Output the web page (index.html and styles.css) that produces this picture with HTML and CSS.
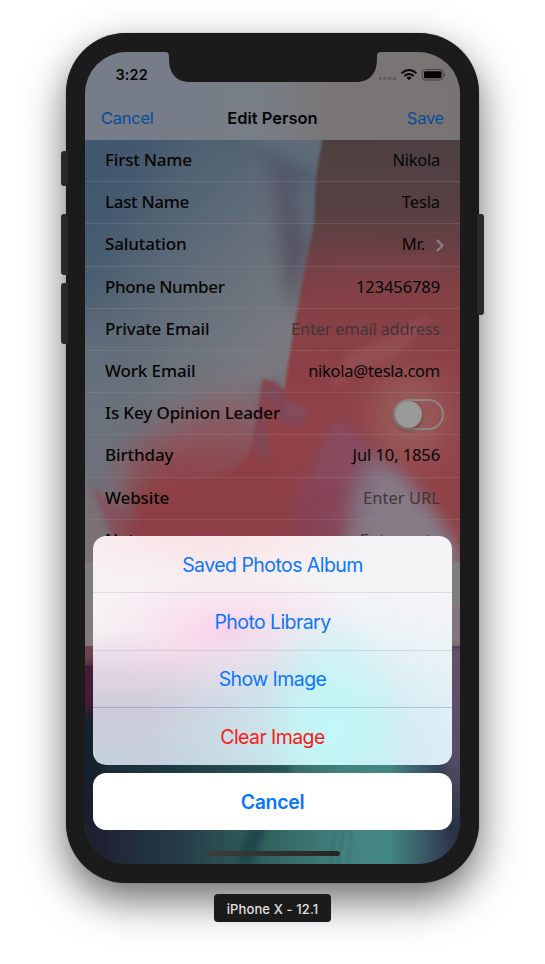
FILE: index.html
```html
<!DOCTYPE html>
<html lang="en">
<head>
<meta charset="utf-8">
<title>Edit Person</title>
<link rel="stylesheet" href="styles.css">
</head>
<body>
<main class="stage">
<div class="phone">
  <i class="key mute"></i><i class="key up"></i><i class="key down"></i><i class="key power"></i>
  <div class="screen">
    <svg class="wallpaper" viewBox="0 0 375 812" preserveAspectRatio="none">
      <defs>
        <filter id="b1" filterUnits="userSpaceOnUse" x="-60" y="0" width="500" height="900" color-interpolation-filters="sRGB"><feGaussianBlur stdDeviation="1.8"/></filter>
        <filter id="b3" filterUnits="userSpaceOnUse" x="-60" y="0" width="500" height="900" color-interpolation-filters="sRGB"><feGaussianBlur stdDeviation="3.5"/></filter>
        <filter id="b8" filterUnits="userSpaceOnUse" x="-60" y="0" width="500" height="900" color-interpolation-filters="sRGB"><feGaussianBlur stdDeviation="9"/></filter>
        <filter id="b20" filterUnits="userSpaceOnUse" x="-100" y="0" width="600" height="900" color-interpolation-filters="sRGB"><feGaussianBlur stdDeviation="20"/></filter>
        <linearGradient id="blue" gradientUnits="userSpaceOnUse" x1="0" y1="130" x2="180" y2="300"><stop offset="0" stop-color="#42586e"/><stop offset=".35" stop-color="#546474"/><stop offset=".7" stop-color="#68717b"/><stop offset="1" stop-color="#78797f"/></linearGradient>
        <linearGradient id="red" x1="0" y1="0" x2="0" y2="1"><stop offset="0" stop-color="#4c4041"/><stop offset=".14" stop-color="#574042"/><stop offset=".28" stop-color="#794146"/><stop offset=".42" stop-color="#8b4146"/><stop offset=".6" stop-color="#924247"/><stop offset="1" stop-color="#8c4046"/></linearGradient>
        <linearGradient id="sea"><stop offset="0" stop-color="#1c1d2e"/><stop offset=".25" stop-color="#263c47"/><stop offset=".5" stop-color="#326561"/><stop offset=".7" stop-color="#438381"/><stop offset=".81" stop-color="#438884"/><stop offset=".93" stop-color="#374b5d"/><stop offset="1" stop-color="#292e42"/></linearGradient>
        <linearGradient id="edge" x1="0" y1="0" x2="0" y2="1"><stop offset="0" stop-color="#685267"/><stop offset=".6" stop-color="#554d66"/><stop offset="1" stop-color="#263044"/></linearGradient>
        <clipPath id="petal"><path d="M-20 60H240L237 90C233 108 230 125 230 150C229 185 222 200 218 225L212 260L205 300L199 338L190 331L178 327L172 365L166 395Q158 415 145 422L90 432L60 500L0 560H-20Z"/></clipPath>
      </defs>
      <rect y="84" width="375" height="516" fill="url(#red)"/>
      <path d="M215 240C260 220 320 220 390 235V280H205Z" fill="#8b4147" filter="url(#b20)" opacity=".6"/>
      <g filter="url(#b1)"><g clip-path="url(#petal)">
        <rect x="-20" y="60" width="280" height="500" fill="url(#blue)"/>
        <path d="M0 60H60L20 240H-20Z" fill="#41586f" filter="url(#b20)" opacity=".6"/>
        <path d="M150 60H245V140L228 185L205 200L185 140Z" fill="#5f6b79" filter="url(#b8)"/>
        <path d="M150 84L235 125V138L205 135Z" fill="#4d5665" filter="url(#b8)" opacity=".8"/>
        <path d="M188 105L207 135L218 175L228 190L210 262L196 215L194 175Z" fill="#50495b" filter="url(#b8)" opacity=".7"/>
        <path d="M215 130H232V180L218 193Z" fill="#5b6575" filter="url(#b3)" opacity=".75"/>
        <path d="M125 350H190L160 450H0L60 395Z" fill="#91535a" filter="url(#b20)" opacity=".85"/>
        <path d="M70 395L190 380V450L50 460Z" fill="#8d4e56" filter="url(#b20)" opacity=".7"/>
        <path d="M60 410L150 418L95 550H40Z" fill="#8e4148" filter="url(#b20)"/>
        <path d="M-20 280H15L26 480H-20Z" fill="#6d7580" filter="url(#b20)" opacity=".8"/>
        <path d="M5 433L40 460L70 520L35 510Z" fill="#8d4654" filter="url(#b3)" opacity=".7"/>
        <path d="M-20 430H0L28 490L38 530H-20Z" fill="#7c7076" filter="url(#b3)"/>
      </g></g>
      <path d="M50 440L140 423L174 395L205 440V540H30Z" fill="#8c3f45" filter="url(#b8)"/>
      <path d="M178 328L184 337L190 324L197 344L200 349L214 350L225 364L214 372L197 371L190 352L180 345L179 370L185 400L179 411L170 392L175 345Z" fill="#7b4a5d" filter="url(#b3)" opacity=".9"/>
      <path d="M199 349L213 351L222 361L214 367L202 362Z" fill="#8a4b5b" filter="url(#b1)" opacity=".7"/>
      <ellipse cx="325" cy="366" rx="35" ry="45" fill="#9b625f" filter="url(#b20)" opacity=".95"/>
      <path d="M238 385L250 370Q270 372 286 395Q330 430 362 486L382 530V560H225L215 440Z" fill="#85485b" filter="url(#b8)" opacity=".85"/>
      <path d="M247 369Q267 372 281 394L300 430L229 430Z" fill="#8a4c62" filter="url(#b3)" opacity=".65"/>
      <path d="M284 400Q332 430 365 489L390 550H250Q260 490 265 440Z" fill="#827382" filter="url(#b8)" opacity=".85"/>
      <path d="M300 415Q336 440 372 500V550H265Q268 500 280 460Z" fill="#888089" filter="url(#b8)" opacity=".8"/>
      <path d="M228 420L237 450L228 470L239 507H200L216 444Z" fill="#893f54" filter="url(#b8)" opacity=".8"/>
      <path d="M262 302L300 285L346 262Q330 290 309 306Q265 321 245 340Z" fill="#9b5960" filter="url(#b3)" opacity=".5"/>
      <rect y="510" width="8" height="42" fill="#7d7d7d"/><rect x="367" y="510" width="8" height="42" fill="#7d7f7d"/>
      <rect y="552" width="12" height="42" fill="#837a7d"/><rect x="363" y="552" width="12" height="42" fill="#84757e"/>
      <rect y="594" width="375" height="218" fill="url(#sea)"/>
      <rect y="594" width="12" height="20" fill="#694451"/><path d="M-5 616L10 608V655L-5 670Z" fill="#481d37" filter="url(#b3)"/>
      <rect x="-10" y="665" width="20" height="72" fill="#12222d" filter="url(#b8)"/>
      <path d="M362 594H385V780H358Z" fill="url(#edge)" filter="url(#b3)"/>
      <rect x="20" y="714" width="185" height="6" fill="#163b43" filter="url(#b3)" opacity=".7"/>
      <path d="M165 775H181L168 812H150Z" fill="#1d4349" filter="url(#b3)" opacity=".85"/>
      <path d="M251 777L245 812M259 777L253 812M267 777L263 812" stroke="#27635f" stroke-width="2" filter="url(#b1)" opacity=".5"/>
    </svg>
    <div class="notch">
      <svg viewBox="0 0 216 30"><path d="M0 0C4 0 4 2 4 7C4 21 11 30 25 30H191C205 30 212 21 212 7C212 2 212 0 216 0Z" fill="#1b1b1b"/></svg>
    </div>
    <header class="top">
      <div class="status"><span class="time">3:22</span>
        <svg class="signals" viewBox="0 0 68 14"><g fill="#5e5d5d"><circle cx="2" cy="9.4" r="1.65"/><circle cx="6.8" cy="9.4" r="1.65"/><circle cx="11.6" cy="9.4" r="1.65"/><circle cx="16.4" cy="9.4" r="1.65"/></g>
          <g fill="none" stroke="#050505" stroke-width="2"><path d="M23.6 4.3Q31 -2.3 38.4 4.3"/><path d="M26.4 7.1Q31 3 35.6 7.1"/></g><path d="M28.5 8.6Q31 6.5 33.5 8.6L31 11.2Z" fill="#050505"/>
          <rect x="44.3" y=".5" width="21" height="10.5" rx="3" fill="none" stroke="#454343"/><rect x="46" y="2.2" width="17.6" height="7.1" rx="1.4" fill="#050505"/><path d="M66.3 4Q68.6 5.7 66.3 7.5Z" fill="#454343"/></svg>
      </div>
      <nav class="nav"><span class="action left">Cancel</span><b>Edit Person</b><span class="action right">Save</span></nav>
    </header>
    <section class="form">
      <div class="row"><span class="n4">First Name</span><span class="val n2">Nikola</span></div>
      <div class="row"><span class="n1">Last Name</span><span class="val">Tesla</span></div>
      <div class="row"><span>Salutation</span><span class="val pick">Mr.<svg viewBox="0 0 8 13"><path d="M1 1L6.5 6.5L1 12" fill="none" stroke="#8e8388" stroke-width="2"/></svg></span></div>
      <div class="row"><span class="n3">Phone Number</span><span class="val phone-no">123456789</span></div>
      <div class="row"><span>Private Email</span><span class="val hint mail">Enter email address</span></div>
      <div class="row"><span>Work Email</span><span class="val n2">nikola@tesla.com</span></div>
      <div class="row"><span>Is Key Opinion Leader</span><span class="switch"></span></div>
      <div class="row"><span>Birthday</span><span class="val">Jul 10, 1856</span></div>
      <div class="row"><span>Website</span><span class="val hint url">Enter URL</span></div>
      <div class="row last"><span class="n3">Notes</span><span class="val hint notes">Enter note</span></div>
    </section>
    <div class="sheet">
      <div class="options">
        <div class="opt"><span>Saved Photos Album</span></div>
        <div class="opt"><span>Photo Library</span></div>
        <div class="opt"><span>Show Image</span></div>
        <div class="opt danger"><span>Clear Image</span></div>
      </div>
      <div class="cancel">Cancel</div>
      <div class="home"></div>
    </div>
  </div>
</div>
<div class="device">iPhone X - 12.1</div>
</main>
</body>
</html>
```
FILE: styles.css
```css
*{box-sizing:border-box}
body{margin:0;background:#fff;font-family:Inter,"Liberation Sans",sans-serif;color:#050505}
.stage{height:964px;padding:33px 0 0 66px;overflow:hidden}
.phone{position:relative;width:413px;height:850px;padding:19px;background:#1b1b1b;border-radius:60px;box-shadow:0 0 1px #555,0 17px 42px rgba(0,0,0,.58)}
.key{position:absolute;width:7px;background:#292929;border-radius:3px 0 0 3px;left:-5px}
.mute{top:118px;height:35px}
.up{top:181px;height:61px}
.down{top:250px;height:61px}
.power{left:auto;right:-5px;top:181px;height:101px;border-radius:0 3px 3px 0}
.screen{position:relative;width:375px;height:812px;border-radius:42px;overflow:hidden;isolation:isolate;background:#42586e}
.wallpaper{position:absolute;inset:0;width:375px;height:812px;z-index:-1}
.notch{position:absolute;left:80px;top:0;width:216px;height:30px;z-index:2}
.notch svg{display:block;width:216px;height:30px}
.top{height:88px;background:linear-gradient(90deg,#767c88 0,#777e88 45%,#797c82 53%,#797675 65%,#777473 100%)}
.status{height:44px;display:flex;justify-content:space-between;padding:15px 14.5px 0 30.5px}
.time{font-size:14.5px;line-height:15px;font-weight:600;letter-spacing:.1px}
.signals{width:68px;height:14px;margin-top:2px}
.nav{height:44px;display:grid;grid-template-columns:1fr auto 1fr;align-items:center;padding:0 16px;font-size:16.5px;letter-spacing:-.25px}
.nav b{font-weight:600;letter-spacing:-.02px;font-size:16.5px}
.action{color:#0a4a9e}
.right{text-align:right}
.form{height:422px;font-family:"Noto Sans","Open Sans",sans-serif;font-size:17px;line-height:22px}
.row{height:42.2px;display:flex;justify-content:space-between;align-items:center;padding:0 20px 1px;border-bottom:1px solid rgba(145,140,150,.3);font-weight:500;white-space:nowrap;letter-spacing:-.12px}
.last{border:0}
.val{font-weight:400;font-size:16.5px;letter-spacing:-.1px}
.n1{letter-spacing:-.32px}
.n2{letter-spacing:-.26px}
.n3{letter-spacing:-.35px}
.n4{letter-spacing:-.2px}
.pick{display:flex;align-items:center;gap:11px;margin-right:-4px}
.pick svg{width:8px;height:13px;margin-top:2px}
.hint{color:#423539}
.mail{letter-spacing:-.25px}
.url{letter-spacing:.02px}
.switch{width:51px;height:31px;margin:2px -4px 0 0;border:2px solid #8d8586;border-radius:16px;display:flex;align-items:center}
.switch::before{content:"";width:27px;height:27px;border-radius:50%;background:#999;box-shadow:0 2px 4px rgba(0,0,0,.3)}
.sheet{position:absolute;left:8px;right:8px;top:484px;font-size:19.5px}
.options{height:229px;border-radius:13px;overflow:hidden;background:radial-gradient(ellipse 75px 120px at 240px 195px,#c1f8f7 0,#c3f8f7a0 50%,transparent 100%),radial-gradient(ellipse 190px 130px at 245px 190px,#c5f3f5d0 0,#cdf2f580 50%,transparent 100%),radial-gradient(ellipse 140px 65px at 135px 95px,#fbd0e9 0,#fbd5e980 45%,transparent 100%),radial-gradient(ellipse 160px 50px at 115px 0,#fae1e4 0,transparent 100%),radial-gradient(ellipse 200px 160px at 359px 50px,#f5f5f6 0,#f5f5f6c0 50%,transparent 100%),linear-gradient(90deg,transparent 55%,#e8e9f8 100%),linear-gradient(#f7f1f4 0,#f5f4f5 40%,#e4d6e3 57%,#cdccda 76%,#c4d1dc 100%)}
.opt{height:57.35px;display:flex;align-items:center;justify-content:center;color:#0b76ff;border-bottom:1px solid rgba(110,90,140,.16);letter-spacing:-.58px;padding-top:1px}
.opt:nth-child(3){border-color:rgba(60,70,130,.26)}
.opt:nth-child(1){letter-spacing:-.55px}
.danger{color:#fc1a18;border:0}
.cancel{height:57px;margin-top:8px;border-radius:13px;background:#fff;color:#0676ff;font-weight:600;display:flex;align-items:center;justify-content:center;letter-spacing:-.3px}
.home{width:134px;height:5px;margin:21px auto 0;border-radius:3px;background:linear-gradient(90deg,#3d3d3d,#252525)}
.device{position:relative;width:117px;height:28px;margin:11px 0 0 148px;border-radius:4px;background:#1b1b1b;color:#e0e0e0;font-size:13px;font-weight:500;display:flex;align-items:center;justify-content:center;letter-spacing:.12px;padding-top:1px;box-shadow:0 0 1px #aaa}
```
